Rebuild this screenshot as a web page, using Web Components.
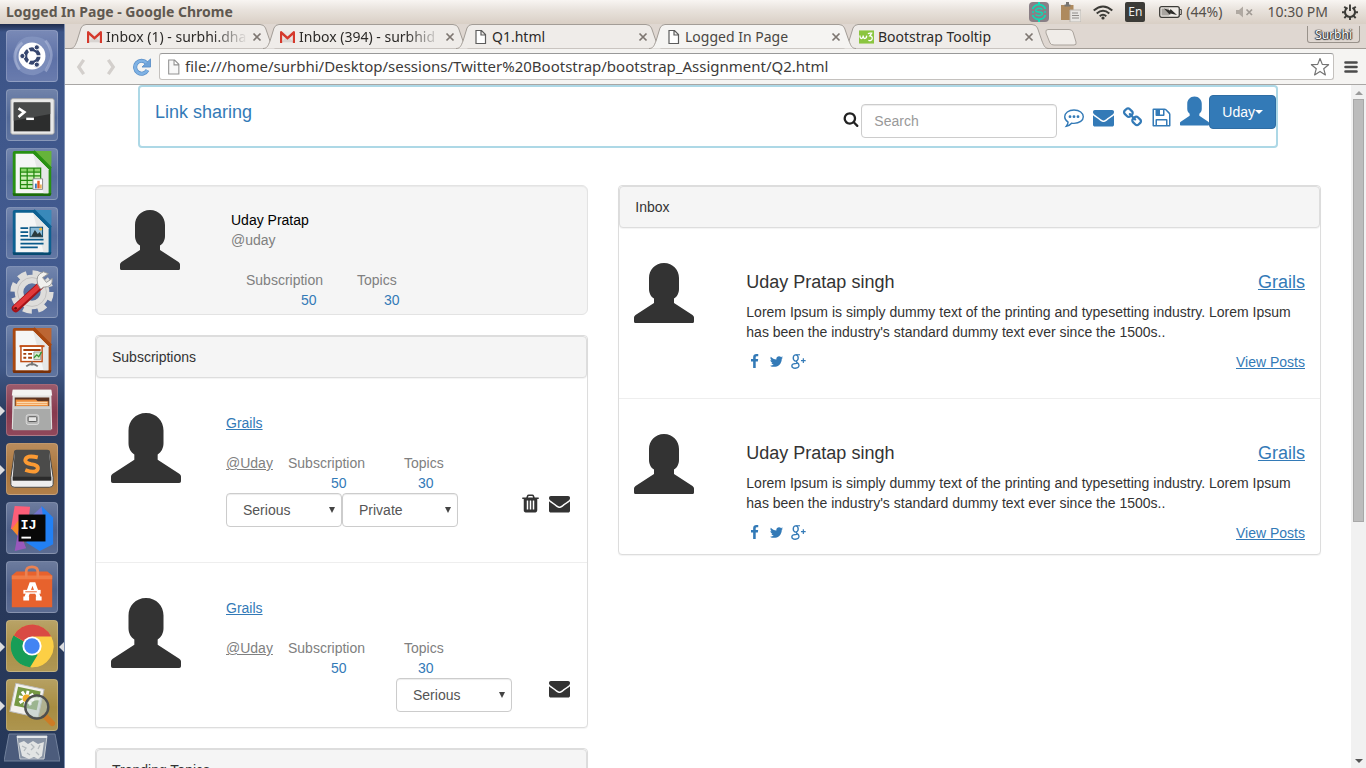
<!DOCTYPE html>
<html lang="en">
<head>
<meta charset="utf-8">
<title>Logged In Page</title>
<style>
  html, body { margin: 0; height: 100%; }
  body { display: flex; flex-direction: column; overflow: hidden; background: #fff; color: #333; font: 14px/20px "Liberation Sans", Arial, sans-serif; }
  main { display: flex; flex: 1; min-height: 0; }
</style>
</head>
<body>
<menu-bar>Logged In Page - Google Chrome</menu-bar>
<main>
  <app-launcher></app-launcher>
  <browser-window>
    <browser-tab slot="tabs" icon="gmail" fade>Inbox (1) - surbhi.dha</browser-tab>
    <browser-tab slot="tabs" icon="gmail" fade>Inbox (394) - surbhid</browser-tab>
    <browser-tab slot="tabs" icon="page">Q1.html</browser-tab>
    <browser-tab slot="tabs" icon="page" active>Logged In Page</browser-tab>
    <browser-tab slot="tabs" icon="w3">Bootstrap Tooltip</browser-tab>
    <site-header>Link sharing</site-header>
    <dashboard-grid>
      <profile-card slot="left"></profile-card>
      <ui-panel slot="left" heading="Subscriptions">
        <subscription-item deletable>
          <ui-select label="Seriousness" options="Serious,Casual,Very Serious"></ui-select>
          <ui-select label="Visibility" options="Private,Public"></ui-select>
        </subscription-item>
        <subscription-item compact>
          <ui-select label="Seriousness" options="Serious,Casual,Very Serious"></ui-select>
        </subscription-item>
      </ui-panel>
      <ui-panel slot="left" heading="Trending Topics"></ui-panel>
      <ui-panel slot="right" heading="Inbox">
        <inbox-post author="Uday Pratap singh" topic="Grails">Lorem Ipsum is simply dummy text of the printing and typesetting industry. Lorem Ipsum has been the industry's standard dummy text ever since the 1500s..</inbox-post>
        <inbox-post author="Uday Pratap singh" topic="Grails" compact>Lorem Ipsum is simply dummy text of the printing and typesetting industry. Lorem Ipsum has been the industry's standard dummy text ever since the 1500s..</inbox-post>
      </ui-panel>
    </dashboard-grid>
  </browser-window>
</main>
<script>
const UI_FONT = '"Noto Sans", "Open Sans", sans-serif';

function define(name, render) {
  customElements.define(name, class extends HTMLElement {
    connectedCallback() {
      if (this.shadowRoot) return;
      const t = document.createElement('template');
      t.innerHTML = render(this);
      this.attachShadow({ mode: 'open' }).append(t.content.cloneNode(true));
    }
  });
}

/* name: [viewBox, markup] */
const fa = '0 0 1792 1792';
const ICONS = {
  user: ['0 0 60 60', '<path d="M30 0C21 0 15 7 15 15V26C15 30 17 34 20 35.500V40L1.500 52Q0 53 0 54.500V58.500Q0 60 1.500 60H58.500Q60 60 60 58.500V54.500Q60 53 58.500 52L40 40V35.500C43 34 45 30 45 26V15C45 7 39 0 30 0Z"/>'],
  envelope: [fa, '<path d="M1792 710v794q0 66-47 113t-113 47h-1472q-66 0-113-47t-47-113v-794q44 49 101 87 362 246 497 345 57 42 92.500 65.500t94.500 48 110 24.500h2q51 0 110-24.500t94.500-48 92.500-65.500q170-123 498-345 57-39 100-87zm0-294q0 79-49 151t-122 123q-376 261-468 325-10 7-42.500 31t-54 38.500-52 32.500-57.500 27-50 9h-2q-23 0-50-9t-57.500-27-52-32.500-54-38.500-42.500-31q-91-64-262-182.500t-205-142.500q-62-42-117-115.500t-55-136.500q0-78 41.500-130t118.500-52h1472q65 0 112.500 47t47.500 113z"/>'],
  facebook: [fa, '<path d="M1343 12v264h-157q-86 0-116 36t-30 108v189h293l-39 296h-254v759h-306v-759h-255v-296h255v-218q0-186 104-288.500t277-102.500q147 0 228 12z"/>'],
  twitter: [fa, '<path d="M1684 408q-67 98-162 167 1 14 1 42 0 130-38 259.500t-115.500 248.500-184.500 210.500-258 146-323 54.500q-271 0-496-145 35 4 78 4 225 0 401-138-105-2-188-64.500t-114-159.500q33 5 61 5 43 0 85-11-112-23-185.500-111.500t-73.500-205.500v-4q68 38 146 41-66-44-105-115t-39-154q0-88 44-163 121 149 294.500 238.500t371.500 99.500q-8-38-8-74 0-134 94.500-228.500t228.500-94.500q140 0 236 102 109-21 205-78-37 115-142 178 93-10 186-50z"/>'],
  gplus: ['0 0 14 14', '<g fill="none" stroke="currentColor"><ellipse cx="4.400" cy="3.700" rx="2.300" ry="2.900" stroke-width="1.300"/><path d="M4.400 .7H8.400" stroke-width="1"/><path d="M5.500 6.500C4 7.700 6.800 8.200 7.300 9.800C8.200 12.200 6 13.300 4 13.300C1.900 13.300 .8 12.300 .8 11C.8 9.200 3 8.700 5.600 8.700" stroke-width="1.300"/><path d="M11.500 4V8.400M9.300 6.200H13.700" stroke-width="1.100"/></g>'],
  search: [fa, '<path d="M1216 832q0-185-131.500-316.500t-316.500-131.500-316.500 131.500-131.500 316.500 131.500 316.500 316.500 131.500 316.500-131.500 131.500-316.500zm512 832q0 52-38 90t-90 38q-54 0-90-38l-343-342q-179 124-399 124-143 0-273.500-55.500t-225-150-150-225-55.500-273.500 55.500-273.500 150-225 225-150 273.500-55.500 273.500 55.500 225 150 150 225 55.500 273.500q0 220-124 399l343 343q37 37 37 90z"/>'],
  floppy: [fa, '<path d="M512 1536h768v-384h-768v384zm896 0h128v-896q0-14-10-38.500t-20-34.500l-281-281q-10-10-34-20t-39-10v416q0 40-28 68t-68 28h-576q-40 0-68-28t-28-68v-416h-128v1280h128v-416q0-40 28-68t68-28h832q40 0 68 28t28 68v416zm-384-928v-320q0-13-9.500-22.500t-22.500-9.500h-192q-13 0-22.500 9.500t-9.500 22.500v320q0 13 9.500 22.500t22.500 9.500h192q13 0 22.500-9.500t9.500-22.500zm640 32v928q0 40-28 68t-68 28h-1344q-40 0-68-28t-28-68v-1344q0-40 28-68t68-28h928q40 0 88 20t76 48l280 280q28 28 48 76t20 88z"/>'],
  chain: [fa, '<path d="M1520 1216q0-40-28-68l-208-208q-28-28-68-28-42 0-72 32 3 3 19 18.500t21.500 21.500 15 19 13 25.500 3.500 27.500q0 40-28 68t-68 28q-15 0-27.500-3.500t-25.500-13-19-15-21.500-21.500-18.500-19q-33 31-33 73 0 40 28 68l206 207q27 27 68 27 40 0 68-26l147-146q28-28 28-67zm-703-705q0-40-28-68l-206-207q-28-28-68-28-39 0-68 27l-147 146q-28 28-28 67 0 40 28 68l208 208q27 27 68 27 42 0 72-31-3-3-19-18.500t-21.500-21.500-15-19-13-25.500-3.500-27.500q0-40 28-68t68-28q15 0 27.500 3.500t25.500 13 19 15 21.500 21.500 18.500 19q33-31 33-73zm895 705q0 120-85 203l-147 146q-83 83-203 83-121 0-204-85l-206-207q-83-83-83-203 0-123 88-209l-88-88q-86 88-208 88-120 0-204-84l-208-208q-84-84-84-204t85-203l147-146q83-83 203-83 121 0 204 85l206 207q83 83 83 203 0 123-88 209l88 88q86-88 208-88 120 0 204 84l208 208q84 84 84 204z"/>'],
  trash: [fa, '<path d="M704 1376v-704q0-14-9-23t-23-9h-64q-14 0-23 9t-9 23v704q0 14 9 23t23 9h64q14 0 23-9t9-23zm256 0v-704q0-14-9-23t-23-9h-64q-14 0-23 9t-9 23v704q0 14 9 23t23 9h64q14 0 23-9t9-23zm256 0v-704q0-14-9-23t-23-9h-64q-14 0-23 9t-9 23v704q0 14 9 23t23 9h64q14 0 23-9t9-23zm-544-992h448l-48-117q-7-9-17-11h-317q-10 2-17 11zm928 32v64q0 14-9 23t-23 9h-96v948q0 83-47 143.500t-113 60.500h-832q-66 0-113-58.500t-47-141.500v-952h-96q-14 0-23-9t-9-23v-64q0-14 9-23t23-9h309l70-167q15-37 54-63t79-26h320q40 0 79 26t54 63l70 167h309q14 0 23 9t9 23z"/>'],
  comment: ['0 0 21 21', '<path d="M10 3C15.500 3 19.300 6 19.300 9.700S15.500 16.400 10 16.400Q8.700 16.400 7.600 16.200C6.300 17.800 4.600 18.900 2.300 19.200C3.300 18 4.100 16.800 4.100 15.100C2 13.800 .7 11.900 .7 9.700C.7 6 4.500 3 10 3Z" fill="none" stroke="currentColor" stroke-width="1.400"/><circle cx="6" cy="9.700" r="1.400"/><circle cx="10" cy="9.700" r="1.400"/><circle cx="14" cy="9.700" r="1.400"/>'],
  gmail: ['0 0 14 12', '<path fill="#e9e6e4" d="M1 1H13V11H1Z"/><path fill="#d8d4d1" d="M1 11L6 6H8L13 11Z"/><path fill="#d5392c" d="M0 1.500Q0 .5 1.300 .5L7 5.500L12.700 .5Q14 .5 14 1.500V11.500H12V4.200L7 8.500L2 4.200V11.500H0Z"/>'],
  page: ['0 0 14 16', '<path d="M2.500 1.500H8L12 5.500V14.500H2.500ZM7.500 1.500V6H12" fill="#fff" stroke="#5c5c5c" stroke-width="1.200"/>'],
  file: ['0 0 14 16', '<path d="M2.500 1.500H8L12 5.500V14.500H2.500ZM7.500 1.500V6H12" fill="#f8f8f8" stroke="#929292" stroke-width="1"/>'],
  w3: ['0 0 16 16', '<path fill="#8bc53f" d="M0 1H16V15H0Z"/><path fill="none" stroke="#fff" stroke-width="1.400" d="M1 6.500Q1 10 3 9.500Q4.500 9 4.500 6.500Q4.500 10 6.500 9.500Q8.500 9 8 6.500M9.500 4.500Q11 3.500 13.500 4L11.500 6.800Q14.500 7 14 10Q13.300 12.500 10 11.500"/>'],
  close: ['0 0 10 10', '<path d="M1.500 1.500L8.500 8.500M8.500 1.500L1.500 8.500" fill="none" stroke="#7d7671" stroke-width="1.700"/>'],
  back: ['0 0 12 20', '<path d="M9 2L3.500 10L9 18" fill="none" stroke="#d3cfcc" stroke-width="3.600"/>'],
  forward: ['0 0 12 20', '<path d="M3 2L8.500 10L3 18" fill="none" stroke="#d3cfcc" stroke-width="3.600"/>'],
  reload: ['0 0 20 20', '<path d="M16 13.500A7.200 7.200 0 1 1 15 5.500" fill="none" stroke="#5a8fc8" stroke-width="4.600"/><path d="M10 10H19.500V1Z" fill="#6ea3d9" stroke="#5a8fc8"/><path d="M16 13.500A7.200 7.200 0 1 1 15 5.500" fill="none" stroke="#7fb2e4" stroke-width="3"/>'],
  star: ['0 0 20 20', '<path d="M10 1.500L12.300 7.400L18.600 7.700L13.700 11.700L15.400 17.900L10 14.400L4.600 17.900L6.300 11.700L1.400 7.700L7.700 7.400Z" fill="#fff" stroke="#747474" stroke-width="1.200" stroke-linejoin="round"/>'],
  burger: ['0 0 14 14', '<path d="M1.500 2.500H12.500M1.500 7H12.500M1.500 11.500H12.500" fill="none" stroke="#4b4b4b" stroke-width="2.600" stroke-linecap="round"/>'],
  swirl: ['0 0 20 20', '<rect width="20" height="20" rx="4" fill="#8a7f86"/><path d="M10 0V3M10 17V20" stroke="#10e0b8" stroke-width="2"/><g fill="none" stroke="#11d8b2" stroke-width="1.800"><path d="M16.500 7A7 7 0 0 0 3.500 7M3.500 13A7 7 0 0 0 16.500 13"/><path d="M13.500 7.500Q10 5 7 7.500Q5.500 10 10 10T13 12.500Q10 15 6.500 12.500M3 10H5M15 10H17" stroke-width="1.500"/></g>'],
  clipboard: ['0 0 20 20', '<path d="M0 3H12.500V18H0Z" fill="#ae8a5e"/><path d="M3.500 4.500V2.500H5V0H8V2.500H9.500V4.500Z" fill="#777470"/><path d="M9 8H20V20H9Z" fill="#e7e5e2" stroke="#bbb6b0"/><path d="M11 11H17M11 13.500H18M11 16H18" stroke="#8e8b88"/>'],
  wifi: ['0 0 20 16', '<g fill="none" stroke="#3c3b37" stroke-width="1.900"><path d="M.7 6.500Q10-1.500 19.300 6.500" /><path d="M3.700 9.500Q10 4 16.300 9.500"/><path d="M6.700 12.300Q10 9.300 13.300 12.300"/></g><circle cx="10" cy="14" r="1.600" fill="#3c3b37"/>'],
  battery: ['0 0 23 12', '<rect x=".7" y=".7" width="19.600" height="10.600" rx="2" fill="#eeeae5" stroke="#3c3b37" stroke-width="1.300"/><path d="M21 3.500H22.300V8.500H21" fill="none" stroke="#3c3b37"/><path d="M2.500 2.500H10V9.500H2.500Z" fill="#a8a49f"/><path d="M5 2.500L11 4.500L11.500 3L18 9L11.500 7.500L11 9Z" fill="#2f2e2b"/>'],
  mute: ['0 0 17 12', '<path d="M0 4H3L7 .5V11.500L3 8H0Z" fill="#b0a9a2"/><path d="M10.500 3.500L16 9M16 3.500L10.500 9" stroke="#a09a94" stroke-width="1.700"/>'],
  gear: ['0 0 16 16', '<g fill="none" stroke="#3c3b37"><path d="M5.500 3.700A5 5 0 1 0 10.500 3.700" stroke-width="2"/><path d="M8 .5V7M0 8.300H3M13 8.300H16M8 13V16M2.300 2.700L4.500 4.900M13.700 2.700L11.500 4.900M2.300 14L4.500 11.800M13.700 14L11.500 11.800" stroke-width="1.900"/></g>'],
};

define('ui-icon', el => {
  const [box, body] = ICONS[el.getAttribute('name')];
  return `<style>:host{display:block;flex:none;width:21px;height:21px}svg{display:block;width:100%;height:100%}</style>
  <svg viewBox="${box}" fill="currentColor" aria-hidden="true">${body}</svg>`;
});

define('menu-bar', () => `
<style>
  :host{display:flex;flex:none;align-items:center;gap:14px;height:24px;padding:0 8px 0 6px;background:linear-gradient(#f8f5f2,#e9e3dd 40%,#d9cfc5);color:#55504b;font:14px/20px ${UI_FONT}}
  b{flex:1;font-weight:700;white-space:nowrap;color:#5f5850}
  span{white-space:nowrap}
  .group{display:flex;align-items:center;gap:12px}
  .power{display:flex;align-items:center;gap:4px}
  .lang{width:20px;height:20px;border-radius:2px;background:#3c3b37;color:#eee;font-size:12px;text-align:center}
  .m{width:20px;height:20px}.w{width:20px;height:16px}.b{width:23px;height:12px}.v{width:17px;height:12px}.g{width:16px;height:16px}
</style>
<b><slot></slot></b>
<div class="group"><ui-icon class="m" name="swirl"></ui-icon><ui-icon class="m" name="clipboard"></ui-icon><ui-icon class="w" name="wifi"></ui-icon><span class="lang">En</span></div>
<div class="power"><ui-icon class="b" name="battery"></ui-icon><span>(44%)</span></div>
<ui-icon class="v" name="mute"></ui-icon><span>10:30 PM</span><ui-icon class="g" name="gear"></ui-icon>`);

/* launcher drawings share a 52 x 52 canvas */
const doc = (c, d, l) => `<path d="M28 2H46V15Z" fill="${l}"/><path d="M8 2H28L46 20V46Q46 49 43 49H8Q6 49 6 46V4Q6 2 8 2Z" fill="${c}"/><path d="M6 46H46Q46 49 43 49H8Q6 49 6 46Z" fill="${d}"/><path d="M28 2H46V20Z" fill="${l}"/><path d="M28 2L46 20" stroke="${c}" stroke-width="2"/><path d="M9 5H27L43 21V46H9Z" fill="#f5f6f6"/><path d="M27 5L43 21V46H38Z" fill="#e5e7e7"/>`;
const APPS = [
  ['Search', '#5a6ea5', '', '<path d="M8 20Q12 4 30 6Q46 8 44 24Q46 42 28 46Q10 46 8 30Z" fill="#8c9cc6" opacity=".6"/><path d="M13 40Q2 24 16 12M40 10Q52 24 40 42" fill="none" stroke="#b7c2df" stroke-width="3" opacity=".5"/><circle cx="26" cy="26" r="14" fill="#fff"/><circle cx="26" cy="26" r="7" fill="none" stroke="#36466f" stroke-width="4"/><path d="M26 26L36 26M26 26L21 17M26 26L21 35" stroke="#fff" stroke-width="1.800"/><g fill="#36466f" stroke="#fff"><circle cx="16" cy="26" r="2.700"/><circle cx="31" cy="17" r="2.700"/><circle cx="31" cy="35" r="2.700"/></g>'],
  ['Terminal', '#4f6696', '', '<rect x="4" y="9" width="45" height="37" rx="2" fill="#e9e9e8" stroke="#aaa"/><rect x="7" y="13" width="38" height="30" fill="#2c2d2d"/><path d="M7 13H45V25L7 32Z" fill="#484a4a"/><path d="M12 19L18 23L12 28" fill="none" stroke="#fff" stroke-width="2.800"/><path d="M20 30H28" stroke="#fff" stroke-width="2.500"/>'],
  ['Calc', '#52699a', '', doc('#289113', '#1c6b0b', '#66b33b') + '<path d="M14 20H35V42H14Z" fill="#cbefb4"/><path d="M14 20H35V24H14Z" fill="#8dd66c"/><path d="M14 20H35V41H14ZM14 24H35M14 28H35M14 32.500H35M14 37H35M21 20V41M28 20V41" fill="none" stroke="#238a0f" stroke-width="1.300"/><path d="M27 31H37V42H27Z" fill="#fff" stroke="#888"/><path d="M29 36H31V41H29Z" fill="#3b78bd"/><path d="M31.500 33H34V41H31.500Z" fill="#e65b20"/><path d="M34.500 37H36V41H34.500Z" fill="#e7a13a"/>'],
  ['Writer', '#52699a', '', doc('#0d6091', '#074a70', '#3989ba') + '<path d="M14 21H22M14 25H22M14 29H22M14 33H38M14 37H38M14 41H32" stroke="#0b5b8b" stroke-width="1.800"/><rect x="24" y="20" width="13" height="10" fill="#8cbbd7" stroke="#0b4d75"/><path d="M25 30L29 23L32 27L34 25L37 30Z" fill="#2b3a3d"/><circle cx="35" cy="22" r="1.500" fill="#f0b637"/>'],
  ['Settings', '#52699a', '', '<g fill="none" stroke="#dedddb"><circle cx="26" cy="26" r="13.500" stroke-width="9"/><circle cx="26" cy="26" r="19.500" stroke-width="6" stroke-dasharray="9 6.315"/></g><circle cx="26" cy="26" r="15" fill="none" stroke="#c3c1bf"/><path d="M9 43L35 19" stroke="#a51217" stroke-width="8" stroke-linecap="round"/><path d="M9 42L33 20" stroke="#e0393b" stroke-width="5" stroke-linecap="round"/><path d="M32 18Q29 8 38 5L43 7L37 11L41 16L47 12Q48 21 38 21L35 23Z" fill="#f1f0ee" stroke="#999"/><circle cx="9" cy="43" r="1.500" fill="#611"/>'],
  ['Impress', '#4f6695', '', doc('#a84810', '#783008', '#bc6633') + '<path d="M13 20H39V22H13Z" fill="#c84e13"/><rect x="14.500" y="21" width="22" height="16" fill="#fff" stroke="#bd4b12" stroke-width="1.500"/><path d="M17 24H35V26H17ZM17 28H20V30H17ZM17 32H20V34H17ZM22 28H26V30H22ZM22 32H26V34H22Z" fill="#a4400d"/><path d="M28 27H35V35H28Z" fill="#d9edcf" stroke="#999"/><path d="M28 33L31 30L33 32L36 27" fill="none" stroke="#349734" stroke-width="1.400"/><path d="M26 37V41M20 42Q26 37 32 42" fill="none" stroke="#777" stroke-width="2"/>'],
  ['Files', '#84354a', 'run', '<path d="M6 5H46L47 46H5Z" fill="#e1e1df"/><path d="M6 5H46L47 11H5Z" fill="#f3f3f1"/><path d="M8 13H44V23H8Z" fill="#5b3320"/><path d="M9 15H30L32 17H43V23H9Z" fill="#ee8e3c"/><path d="M10 18H42M10 20H42" stroke="#fff0d0"/><path d="M7 22H45L46 47H6Z" fill="#a9aaa9"/><path d="M7 22H45V25H7Z" fill="#cfcfce"/><rect x="20" y="31" width="13" height="10" rx="2" fill="#b6b6b5" stroke="#dedede"/><rect x="22" y="33" width="9" height="5" rx="1" fill="#e7e7e6" stroke="#555"/>'],
  ['Sublime Text', '#a97237', 'run', '<path d="M8 7H44L48 35V42Q48 45 44 45H8Q4 45 4 42V35Z" fill="#eee" stroke="#444"/><path d="M10 6H42Q44 6 44 9L46 34V38H6V34L8 9Q8 6 10 6Z" fill="#4b4b4a"/><path d="M6 34H46V38H6Z" fill="#2b2b2b"/><path d="M32 14Q20 11 19 17Q19 20 25 21Q33 22 32 26Q30 31 19 27" fill="none" stroke="#fb9a33" stroke-width="4"/>'],
  ['IntelliJ IDEA', '#4b5d87', '', '<path d="M8 3L24 4L21 30L4 27Z" fill="#fd5e78"/><path d="M5 27L12 18L18 42Z" fill="#f78b29"/><path d="M12 28L20 47L8 50Z" fill="#9958bc"/><path d="M36 3L48 15L48 43L34 50L20 41Z" fill="#2280f4"/><path d="M21 18L36 4L39 25Z" fill="#7474ce"/><rect x="12" y="12" width="28" height="28" fill="#080808"/><path d="M15 36H25" stroke="#fff" stroke-width="2"/>', 'IJ'],
  ['Software Center', '#4b5d87', '', '<path d="M5 14L10 10H42L47 14V47H5Z" fill="#e7622d"/><path d="M5 14H47V18H5Z" fill="#f17b45"/><path d="M20 16V10Q20 5 26 5T32 10V16" fill="none" stroke="#eb8252" stroke-width="2.800"/><path d="M17 38H23M30 38H36M20 37L25 23H28L33 37" fill="none" stroke="#fff" stroke-width="4"/><path d="M17 31H35" stroke="#fff" stroke-width="4"/><path d="M19 31H31" stroke="#e7622d"/>'],
  ['Google Chrome', '#a88d43', 'run focus', '<circle cx="26" cy="26" r="22" fill="#f8cd40"/><path d="M26 26L15 45A22 22 0 0 1 7 15Z" fill="#179d57"/><path d="M26 26L7 15A22 22 0 0 1 46 16Z" fill="#d94a43"/><path d="M7 15L17 32L32 35L24 48A22 22 0 0 1 7 15Z" fill="#179d57"/><path d="M26 16H46A22 22 0 0 1 25 48L35 31Z" fill="#fccf45"/><circle cx="26" cy="26" r="10" fill="#fff"/><circle cx="26" cy="26" r="8" fill="#4284f3"/>'],
  ['Image Viewer', '#a58a3d', 'run', '<g transform="rotate(12 20 20)"><rect x="6" y="6" width="30" height="30" fill="#f3f1ed" stroke="#bbb"/><rect x="9" y="9" width="24" height="20" fill="#759944"/><g stroke="#fff" stroke-width="3"><path d="M12 19H28M20 11V27M14 13L26 25M26 13L14 25"/></g><circle cx="20" cy="19" r="4" fill="#f0ae27"/></g><path d="M39 37L47 45" stroke="#cd7c25" stroke-width="6" stroke-linecap="round"/><circle cx="31" cy="28" r="12" fill="#b6c8c3" fill-opacity=".6" stroke="#4e504f" stroke-width="2.500"/><path d="M23 25Q27 18 34 20" fill="none" stroke="#fff" stroke-width="3" opacity=".7"/>'],
];

define('app-launcher', () => `
<style>
  :host{display:block;flex:none;box-sizing:border-box;width:65px;padding:6px 6px 0;overflow:hidden;border-right:1px solid #8293b3;background:linear-gradient(#1f2c4d,#3c5487 8px,#435b90 30%,#405887 46%,#2b3d60 52%,#29395b 75%,#263859)}
  nav{display:flex;flex-direction:column;gap:7px}
  button{position:relative;display:block;box-sizing:border-box;width:52px;height:52px;padding:0;border:1px solid #ffffff30;border-radius:4px;background:linear-gradient(#ffffff30,#ffffff05 55%,#ffffff18) var(--tile)}
  svg{display:block;width:50px;height:50px}
  .run::before,.focus::after{content:"";position:absolute;top:21px;left:-7px;border:5px solid transparent;border-left-color:#dcdde0;border-right-width:0}
  .focus::after{left:auto;right:-7px;border:5px solid transparent;border-right-color:#dcdde0;border-left-width:0}
  text{font:bold 14px "Liberation Mono",monospace;fill:#fff}
  .bin{width:56px;height:30px;margin:2px 0 0 -2px;border:0;background:none}
  .bin svg{width:56px;height:30px}
</style>
<nav aria-label="Launcher">${APPS.map(([n, c, k, art, t]) => `<button aria-label="${n}" class="${k}" style="--tile:${c}"><svg viewBox="0 0 52 52" fill="none">${art}${t ? `<text x="14" y="27">${t}</text>` : ''}</svg></button>`).join('')}</nav>
<button class="bin" aria-label="Trash"><svg viewBox="0 0 56 30"><path d="M5 1H51L56 28H0Z" fill="#4c5c7c" stroke="#71809b"/><path d="M13 3H43L40 26H16Z" fill="#8994a5" stroke="#c6ccd2"/><path d="M15 10L20 8L24 11L29 8L34 11L40 9L38 23L34 26L30 24L25 26L18 23Z" fill="#e2e4e4"/><path d="M18 13L22 15L20 18M27 11L30 14L27 17M36 12L34 16M23 20L26 22M32 19L35 22" fill="none" stroke="#b4babe" stroke-width="1.300"/><path d="M13 4H43" stroke="#e3e7eb" stroke-width="2"/></svg></button>`);

define('browser-tab', el => `
<style>
  :host{position:relative;display:flex;flex:0 1 193px;align-items:center;min-width:0;height:24px;box-sizing:border-box;padding:1px 8px 0 10px;gap:4px;color:#2c2a28;font:14px/20px ${UI_FONT}}
  :host([active]){z-index:1;color:#4a4744}
  .shape{position:absolute;inset:0 auto auto -7px;width:calc(100% + 14px);height:25px;fill:#efece9;stroke:#a39d97}
  :host([active]) .shape{fill:#f5f4f2}
  ui-icon,span,button{position:relative}
  .fav{width:15px;height:16px}
  span{flex:1;overflow:hidden;white-space:nowrap}
  :host([fade]) span{-webkit-mask-image:linear-gradient(90deg,#000 75%,transparent);mask-image:linear-gradient(90deg,#000 75%,transparent)}
  button{display:grid;place-items:center;width:10px;height:16px;padding:0;border:0;background:none}
  button ui-icon{width:10px;height:10px}
</style>
<svg class="shape" viewBox="0 0 207 25" preserveAspectRatio="none" aria-hidden="true"><path d="M0 24.500C4 24.500 5 22 7 17L11 4Q12.500 .5 16 .5H190Q194 .5 195.500 4L200 17C202 22 203 24.500 207 24.500"/></svg>
<ui-icon class="fav" name="${el.getAttribute('icon')}"></ui-icon><span><slot></slot></span>
<button aria-label="Close tab"><ui-icon name="close"></ui-icon></button>`);

define('browser-window', () => `
<style>
  :host{display:flex;flex:1;flex-direction:column;min-width:0}
  .strip{display:flex;flex:none;height:24px;padding:0 6px 0 12px;background:#dfd7d1;border-bottom:1px solid #a39d97}
  .new{width:32px;height:17px;margin:5px 0 0 3px;padding:0;border:0;background:none}
  .new svg{display:block}
  .who{height:17px;box-sizing:border-box;margin:2px 0 0 auto;padding:0 7px;border:1px solid #99928b;border-top:0;border-radius:0 0 3px 3px;color:#fff;font:12px/17px ${UI_FONT};text-shadow:0 0 1px #222,1px 0 1px #333,-1px 0 1px #333,0 1px 1px #333}
  .bar{display:flex;flex:none;align-items:center;height:35px;padding:0 8px;background:#f5f4f2;border-bottom:1px solid #a9a7a5}
  .bar button{padding:0;border:0;background:none}
  .bf{width:16px;height:18px}
  .re{width:18px;height:18px}
  nav{display:flex;gap:14px;width:86px;align-items:center}
  .url{display:flex;flex:1;align-items:center;gap:4px;box-sizing:border-box;height:27px;padding:0 3px 0 6px;border:1px solid #c4c1be;border-top-color:#999;border-radius:3px;background:#fff}
  input{flex:1;min-width:0;padding:0 0 2px;border:0;outline:0;background:none;color:#3d3b3a;font:15px/22px ${UI_FONT}}
  .pg{width:15px;height:18px}.st{width:20px;height:20px}.mn{width:14px;height:14px;margin-left:10px}
  .view{display:flex;flex:1;min-height:0}
  .page{flex:1;min-width:0;overflow:hidden;background:#fff}
  .scroll{display:flex;flex:none;flex-direction:column;align-items:center;width:15px;background:#f1f1f1}
  .arrow{margin:6px 0 4px;border:4px solid transparent;border-top:0;border-bottom-color:#9b9b9b}
  .thumb{width:11px;height:62%;box-sizing:border-box;border:1px solid #a8a8a8;background:#bcbcbc}
  .down{margin:auto 0 5px;border:4px solid transparent;border-bottom:0;border-top-color:#555}
</style>
<div class="strip"><slot name="tabs"></slot>
<button class="new" aria-label="New tab"><svg width="32" height="17"><path d="M3 .5H24Q27 .5 28 3L31 13Q32 16 29 16H9Q6 16 5 14L1 4Q0 .5 3 .5Z" fill="#f0ece8" stroke="#aaa39c"/></svg></button>
<span class="who">Surbhi</span></div>
<div class="bar"><nav><button aria-label="Back"><ui-icon class="bf" name="back"></ui-icon></button><button aria-label="Forward"><ui-icon class="bf" name="forward"></ui-icon></button><button aria-label="Reload"><ui-icon class="re" name="reload"></ui-icon></button></nav>
<div class="url"><ui-icon class="pg" name="file"></ui-icon><input aria-label="Address" value="file:///home/surbhi/Desktop/sessions/Twitter%20Bootstrap/bootstrap_Assignment/Q2.html"><ui-icon class="st" name="star"></ui-icon></div>
<button aria-label="Menu"><ui-icon class="mn" name="burger"></ui-icon></button></div>
<div class="view"><div class="page"><slot></slot></div><div class="scroll" aria-hidden="true"><i class="arrow"></i><i class="thumb"></i><i class="down"></i></div></div>`);

define('site-header', () => `
<style>
  :host{display:flex;justify-content:space-between;box-sizing:border-box;max-width:1140px;height:63px;margin:0 auto 37px;border:2px solid #add8e6;border-radius:4px;color:#337ab7}
  a{color:inherit;text-decoration:none}
  .brand{padding:15px;font-size:18px}
  .tools{display:flex;align-items:flex-start;padding-top:8px}
  .links{display:flex;gap:8px;margin:12px 8px 0 7px}
  label{margin:16px 2px 0 0;color:#222}
  label ui-icon{width:16px;height:16px}
  input{box-sizing:border-box;width:196px;height:34px;margin-top:9px;padding:6px 12px;border:1px solid #ccc;border-radius:4px;box-shadow:inset 0 1px 1px #00000013;font:14px/20px "Liberation Sans",Arial,sans-serif}
  input::placeholder{color:#999;opacity:1}
  .me{width:29px;height:30px;margin-top:1px}
  button{display:flex;align-items:center;height:34px;padding:0 12px;border:1px solid #2e6da4;border-radius:4px;background:#337ab7;color:#fff;font:14px/20px "Liberation Sans",Arial,sans-serif}
  i{border:4px solid transparent;border-top-color:#fff;border-bottom:0}
</style>
<a class="brand" href="#"><slot></slot></a>
<div class="tools"><label for="q" aria-label="Search"><ui-icon name="search"></ui-icon></label><input id="q" placeholder="Search">
<div class="links"><a href="#" aria-label="Messages"><ui-icon name="comment"></ui-icon></a><a href="#" aria-label="Invite"><ui-icon name="envelope"></ui-icon></a><a href="#" aria-label="Share link"><ui-icon name="chain"></ui-icon></a><a href="#" aria-label="Save"><ui-icon name="floppy"></ui-icon></a></div>
<ui-icon class="me" name="user"></ui-icon><button>Uday<i></i></button></div>`);

define('dashboard-grid', () => `
<style>
  :host{display:grid;grid-template-columns:5fr 7fr;padding:0 15px}
  section{display:flex;flex-direction:column;gap:20px;min-width:0;padding:0 15px}
</style>
<section><slot name="left"></slot></section><section><slot name="right"></slot></section>`);

define('stat-count', el => `
<style>
  :host{display:block;flex:none;color:gray}
  a{display:block;color:#337ab7;text-decoration:none;padding-left:var(--indent)}
</style>
<slot></slot><a href="#">${el.getAttribute('count')}</a>`);

define('profile-card', () => `
<style>
  :host{display:flex;box-sizing:border-box;padding:24px 24px 4px;border:1px solid #e3e3e3;border-radius:6px;background:#f5f5f5;box-shadow:inset 0 1px 1px #0000000d;color:gray}
  ui-icon{width:60px;height:60px;margin-right:51px;color:#333}
  strong{display:block;font-weight:400;color:#000}
  .stats{display:flex;gap:34px;padding:20px 0 0 15px}
  .s{--indent:55px}.t{--indent:27px}
</style>
<ui-icon name="user"></ui-icon>
<div><strong>Uday Pratap</strong>@uday<div class="stats"><stat-count class="s" count="50">Subscription</stat-count><stat-count class="t" count="30">Topics</stat-count></div></div>`);

define('ui-panel', el => `
<style>
  :host{display:block;border:1px solid #ddd;border-radius:4px;background:#fff;box-shadow:0 1px 1px #0000000d}
  h3{margin:0;padding:10px 15px;border:1px solid #ddd;border-radius:4px;background:#f5f5f5;color:#333;font:14px/20px "Liberation Sans",Arial,sans-serif;box-shadow:0 1px 1px #0000000d}
  ::slotted(:not(:last-child)){border-bottom:1px solid #eee}
</style>
<h3>${el.getAttribute('heading')}</h3><slot></slot>`);

define('ui-select', el => `
<style>
  :host{position:relative;display:block;flex:none;width:116px;height:34px}
  select{appearance:none;box-sizing:border-box;width:100%;height:34px;padding:6px 16px;border:1px solid #ccc;border-radius:4px;background:#fff;box-shadow:inset 0 1px 1px #00000013;color:#555;font:14px/20px "Liberation Sans",Arial,sans-serif}
  svg{position:absolute;right:7px;top:14px;pointer-events:none}
</style>
<select aria-label="${el.getAttribute('label')}">${el.getAttribute('options').split(',').map(o => `<option>${o}</option>`).join('')}</select>
<svg width="6" height="6" fill="#444" aria-hidden="true"><path d="M0 0H6L3 6Z"/></svg>`);

define('subscription-item', el => `
<style>
  :host{display:flex;padding:35px 15px}
  :host([compact]){padding-bottom:15px}
  .face{width:70px;height:70px;margin-right:45px;color:#333}
  .body{flex:1;min-width:0}
  a{color:#337ab7}
  .by{width:62px;color:gray}
  .by a{color:gray}
  .stats{display:flex;padding-top:20px}
  .s{width:116px;--indent:43px}.t{--indent:14px}
  .row{display:flex;justify-content:space-between}
  .controls{display:flex}
  :host([compact]) .controls{padding-left:170px}
  .actions{display:flex;align-items:flex-start;gap:8px;padding-right:2px;color:#333}
  button{display:block;padding:0;border:0;background:none;color:inherit}
</style>
<ui-icon class="face" name="user"></ui-icon>
<div class="body"><a href="#">Grails</a>
<div class="stats"><span class="by"><a href="#">@Uday</a></span><stat-count class="s" count="50">Subscription</stat-count><stat-count class="t" count="30">Topics</stat-count></div>
<div class="row"><div class="controls"><slot></slot></div><div class="actions">${el.hasAttribute('deletable') ? '<button aria-label="Delete"><ui-icon name="trash"></ui-icon></button>' : ''}<button aria-label="Send invite"><ui-icon name="envelope"></ui-icon></button></div></div></div>`);

define('inbox-post', el => `
<style>
  :host{display:flex;padding:35px 15px 26px}
  :host([compact]){padding-bottom:11px}
  .face{width:60px;height:60px;margin-right:52px;color:#333}
  .body{flex:1;min-width:0;padding-top:9px}
  header,footer{display:flex;justify-content:space-between}
  header{font-size:18px}
  h4{margin:0;font:inherit}
  p{margin:10px 0}
  a{color:#337ab7}
  .social{display:flex;gap:7px;padding:2px 0 0 1px}
  .social ui-icon{width:15px;height:15px}
</style>
<ui-icon class="face" name="user"></ui-icon>
<div class="body"><header><h4>${el.getAttribute('author')}</h4><a href="#">${el.getAttribute('topic')}</a></header>
<p><slot></slot></p>
<footer><div class="social"><a href="#" aria-label="Facebook"><ui-icon name="facebook"></ui-icon></a><a href="#" aria-label="Twitter"><ui-icon name="twitter"></ui-icon></a><a href="#" aria-label="Google Plus"><ui-icon name="gplus"></ui-icon></a></div><a href="#">View Posts</a></footer></div>`);
</script>
</body>
</html>
